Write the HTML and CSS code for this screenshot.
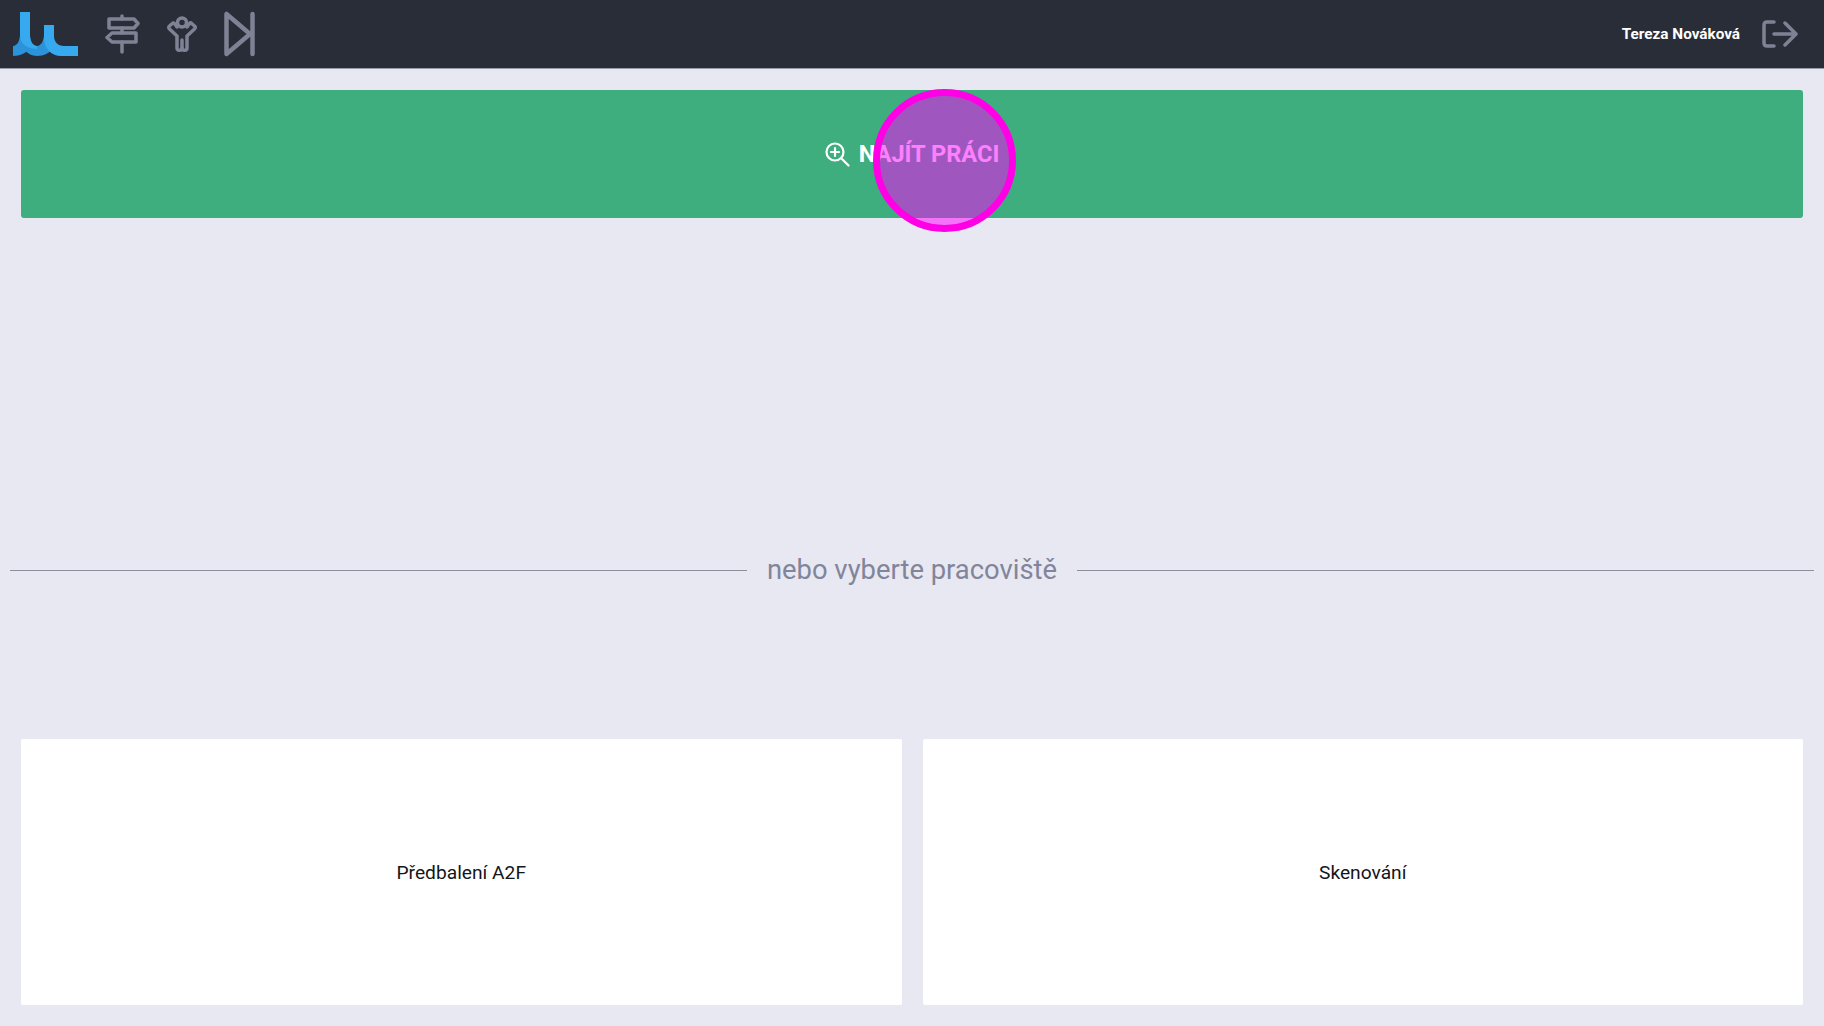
FILE: index.html
```html
<!DOCTYPE html>
<html lang="cs">
<head>
  <meta charset="UTF-8">
  <title>Pracoviště</title>
  <link rel="stylesheet" href="styles.css">
</head>
<body>
  <header class="topbar">
    <div class="topbar-left">
      <svg class="logo" width="66" height="46" viewBox="0 -1 66 46">
        <path fill="#2b93da" d="M7 22c0 7-3 12-7 12v10c7 0 14-3 18-9z"/>
        <path fill="#2b93da" d="M31 22c0 7-3 12-7 12s-7-5-7-12H7c0 13 7 22 17 22 7 0 13-3 17-9V22z"/>
        <path fill="#36a9ef" d="M7 0h10v24c0 6 3 10 7 10v3c-9 0-17-5-17-13z"/>
        <path fill="#36a9ef" d="M31 13h10v11c0 6 4 10 10 10h14v10H48c-9 0-17-7-17-18z"/>
      </svg>
      <svg class="nav-icon" width="35" height="40" viewBox="0 0 35 40" fill="none" stroke="#7f8294" stroke-width="3.5" stroke-linecap="round" stroke-linejoin="round">
        <path d="M17 2v3M17 14v5M17 28v10"/>
        <path d="M4 5h25l4 4.5-4 4.500H4z"/>
        <path d="M31 19H7l-5 4.5L7 28h24z"/>
      </svg>
      <svg class="nav-icon" width="32" height="38" viewBox="0 0 32 38" fill="none" stroke="#7f8294" stroke-width="3.5" stroke-linecap="round" stroke-linejoin="round">
        <circle cx="16" cy="7.5" r="4.5"/>
        <path d="M11 12 8.500 8.500c-.7-.7-1.500-.7-2.200 0L3.500 11c-1 1-1 2 0 3l7.500 7v12c0 3 5 3 5 0v-8"/>
        <path d="M21 12l2.500-3.500c.7-.7 1.500-.7 2.200 0l2.800 2.500c1 1 1 2 0 3L21 21v12c0 3-5 3-5 0"/>
      </svg>
      <svg class="nav-icon" width="32" height="46" viewBox="0 0 32 46" fill="none" stroke="#7f8294" stroke-width="4.5" stroke-linecap="round" stroke-linejoin="round">
        <path d="M2.5 3v40L26 23z"/>
        <path d="M28.5 3v40"/>
      </svg>
    </div>
    <div class="topbar-right">
      <span class="user-name">Tereza Nováková</span>
      <svg width="37" height="28" viewBox="0 0 37 28" fill="none" stroke="#7f8294" stroke-width="3.5" stroke-linecap="round" stroke-linejoin="round">
        <path d="M13 2H6C4 2 3 3 3 5v18c0 2 1 3 3 3h7"/>
        <path d="M13 14h22M24 3l11 11-11 11"/>
      </svg>
    </div>
  </header>

  <main class="content">
    <button class="find-work">
      <svg width="25" height="25" viewBox="0 0 25 25" fill="none" stroke="#fff" stroke-width="2.2" stroke-linecap="round">
        <circle cx="10" cy="10" r="8.5"/>
        <path d="M16 16l7.5 7.5M10 6v8M6 10h8"/>
      </svg>
      <span>NAJÍT PRÁCI</span>
    </button>

    <div class="divider">
      <span class="divider-text">nebo vyberte pracoviště</span>
    </div>

    <div class="stations">
      <div class="station">Předbalení A2F</div>
      <div class="station">Skenování</div>
    </div>
  </main>

  <div class="click-marker"></div>
</body>
</html>
```

FILE: styles.css
```css
* {
  box-sizing: border-box;
}
html, body {
  height: 100%;
}
body {
  margin: 0;
  font-family: Roboto, "Liberation Sans", sans-serif;
  background-color: #e7e8f2;
  overflow: hidden;
}
.topbar {
  height: 69px;
  display: flex;
  align-items: center;
  justify-content: space-between;
  padding: 0 26px 0 13px;
  background-color: #282d38;
  border-bottom: 1px solid #9a9ca8;
}
.topbar-left {
  display: flex;
  align-items: center;
  gap: 26px;
}
.topbar-right {
  display: flex;
  align-items: center;
  gap: 21px;
}
.user-name {
  color: #fff;
  font-size: 15.3px;
  font-weight: 700;
}
.content {
  padding: 21px 10px 0;
}
.find-work {
  display: flex;
  align-items: center;
  justify-content: center;
  gap: 9px;
  width: calc(100% - 22px);
  height: 128px;
  margin: 0 11px;
  border: none;
  border-radius: 3px;
  background-color: #3fae7f;
  color: #fff;
  font-family: inherit;
  font-size: 23.6px;
  font-weight: 700;
}
.divider {
  display: flex;
  align-items: center;
  gap: 20px;
  height: 30px;
  margin-top: 337px;
  color: #82859a;
  font-size: 27.4px;
}
.divider::before,
.divider::after {
  content: "";
  flex: 1;
  height: 1px;
  background-color: #8d8f9e;
}
.stations {
  display: grid;
  grid-template-columns: 1fr 1fr;
  gap: 21px;
  margin: 154px 11px 0;
}
.station {
  height: 266px;
  display: flex;
  align-items: center;
  justify-content: center;
  border-radius: 2px;
  background-color: #fff;
  color: #14151a;
  font-size: 19.2px;
}
.click-marker {
  position: absolute;
  left: 873px;
  top: 89px;
  width: 143px;
  height: 143px;
  border: 7px solid #ff00e6;
  border-radius: 50%;
  background-color: rgba(255, 0, 255, 0.5);
}
```
